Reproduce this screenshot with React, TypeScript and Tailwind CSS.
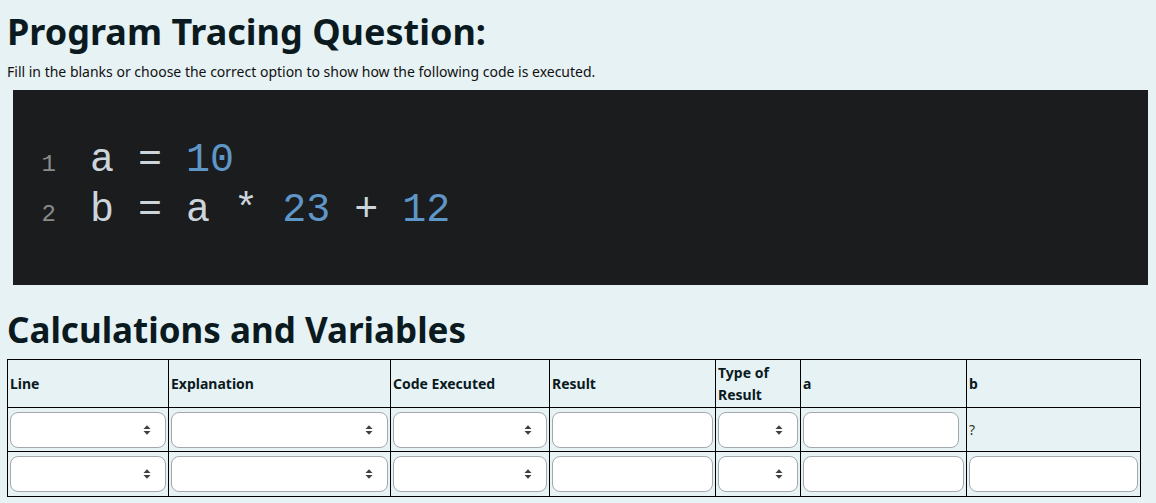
import React from "react";

const sans = "font-[family-name:'Segoe_UI','Noto_Sans','Open_Sans',sans-serif]";
const mono = "font-[family-name:'Liberation_Mono','Courier_New',monospace]";

const SelectBox = () => (
  <div className="relative w-full">
    <select className="block h-[36px] w-full appearance-none rounded-[8px] border border-[#a3a8ad] bg-white px-2 text-sm outline-none">
      <option value=""></option>
    </select>
    <svg
      className="pointer-events-none absolute right-[15px] top-1/2 -translate-y-1/2"
      width="8"
      height="11"
      viewBox="0 0 8 11"
    >
      <path d="M0.5 4.5 L4 0.8 L7.5 4.5 Z" fill="#3c4043" />
      <path d="M0.5 6.5 L4 10.2 L7.5 6.5 Z" fill="#3c4043" />
    </svg>
  </div>
);

const TextBox = ({ className = "" }: { className?: string }) => (
  <input
    type="text"
    className={`block h-[36px] rounded-[8px] border border-[#a3a8ad] bg-white px-2 text-sm outline-none ${className}`}
  />
);

const headers = [
  { label: "Line", width: "w-[161px]" },
  { label: "Explanation", width: "w-[222px]" },
  { label: "Code Executed", width: "w-[159px]" },
  { label: "Result", width: "w-[166px]" },
  { label: "Type of Result", width: "w-[85px]" },
  { label: "a", width: "w-[166px]" },
  { label: "b", width: "w-[174px]" },
];

export default function App() {
  const th = "border border-black px-[2px] py-0 text-left align-middle text-sm font-bold leading-[22px]";
  const td = "border border-black p-[2px] align-middle";

  return (
    <div className={`min-h-[503px] w-full bg-[#e6f2f4] px-[7px] pt-[7px] text-[#0b1a1f] ${sans}`}>
      <h1 className="text-[36px] font-bold leading-[50px]">Program Tracing Question:</h1>
      <p className="mt-[5px] text-sm leading-[20px] text-[#111]">
        Fill in the blanks or choose the correct option to show how the following code is executed.
      </p>

      <div className={`ml-[6px] mr-[1px] mt-[8px] h-[195px] bg-[#1b1c1e] pt-[46px] ${mono}`}>
        {[
          [1, <><span>a</span> <span>=</span> <span className="text-[#5f96c8]">10</span></>],
          [2, <><span>b</span> <span>=</span> <span>a</span> <span>*</span> <span className="text-[#5f96c8]">23</span> <span>+</span> <span className="text-[#5f96c8]">12</span></>],
        ].map(([n, code]) => (
          <div key={n as number} className="flex h-[50px] items-baseline leading-[50px]">
            <div className={`w-[43px] text-right text-[24px] text-[#8a8a8a] ${mono}`}>{n as number}</div>
            <pre className={`ml-[34px] whitespace-pre text-[40px] text-[#cdd5dc] ${mono}`}>
              {code as React.ReactNode}
            </pre>
          </div>
        ))}
      </div>

      <h2 className="mt-[20px] text-[35px] font-bold leading-[50px]">Calculations and Variables</h2>

      <table className="mt-[4px] w-[1133px] table-fixed border-collapse">
        <thead>
          <tr className="h-[48px]">
            {headers.map((h) => (
              <th key={h.label} className={`${th} ${h.width}`}>
                {h.label}
              </th>
            ))}
          </tr>
        </thead>
        <tbody>
          <tr className="h-[44px]">
            <td className={td}><SelectBox /></td>
            <td className={td}><SelectBox /></td>
            <td className={td}><SelectBox /></td>
            <td className={td}><TextBox className="w-full" /></td>
            <td className={td}><SelectBox /></td>
            <td className={td}><TextBox className="w-[156px]" /></td>
            <td className={`${td} text-sm text-[#3a3a20]`}>?</td>
          </tr>
          <tr className="h-[45px]">
            <td className={td}><SelectBox /></td>
            <td className={td}><SelectBox /></td>
            <td className={td}><SelectBox /></td>
            <td className={td}><TextBox className="w-full" /></td>
            <td className={td}><SelectBox /></td>
            <td className={td}><TextBox className="w-full" /></td>
            <td className={td}><TextBox className="w-full" /></td>
          </tr>
        </tbody>
      </table>
    </div>
  );
}
